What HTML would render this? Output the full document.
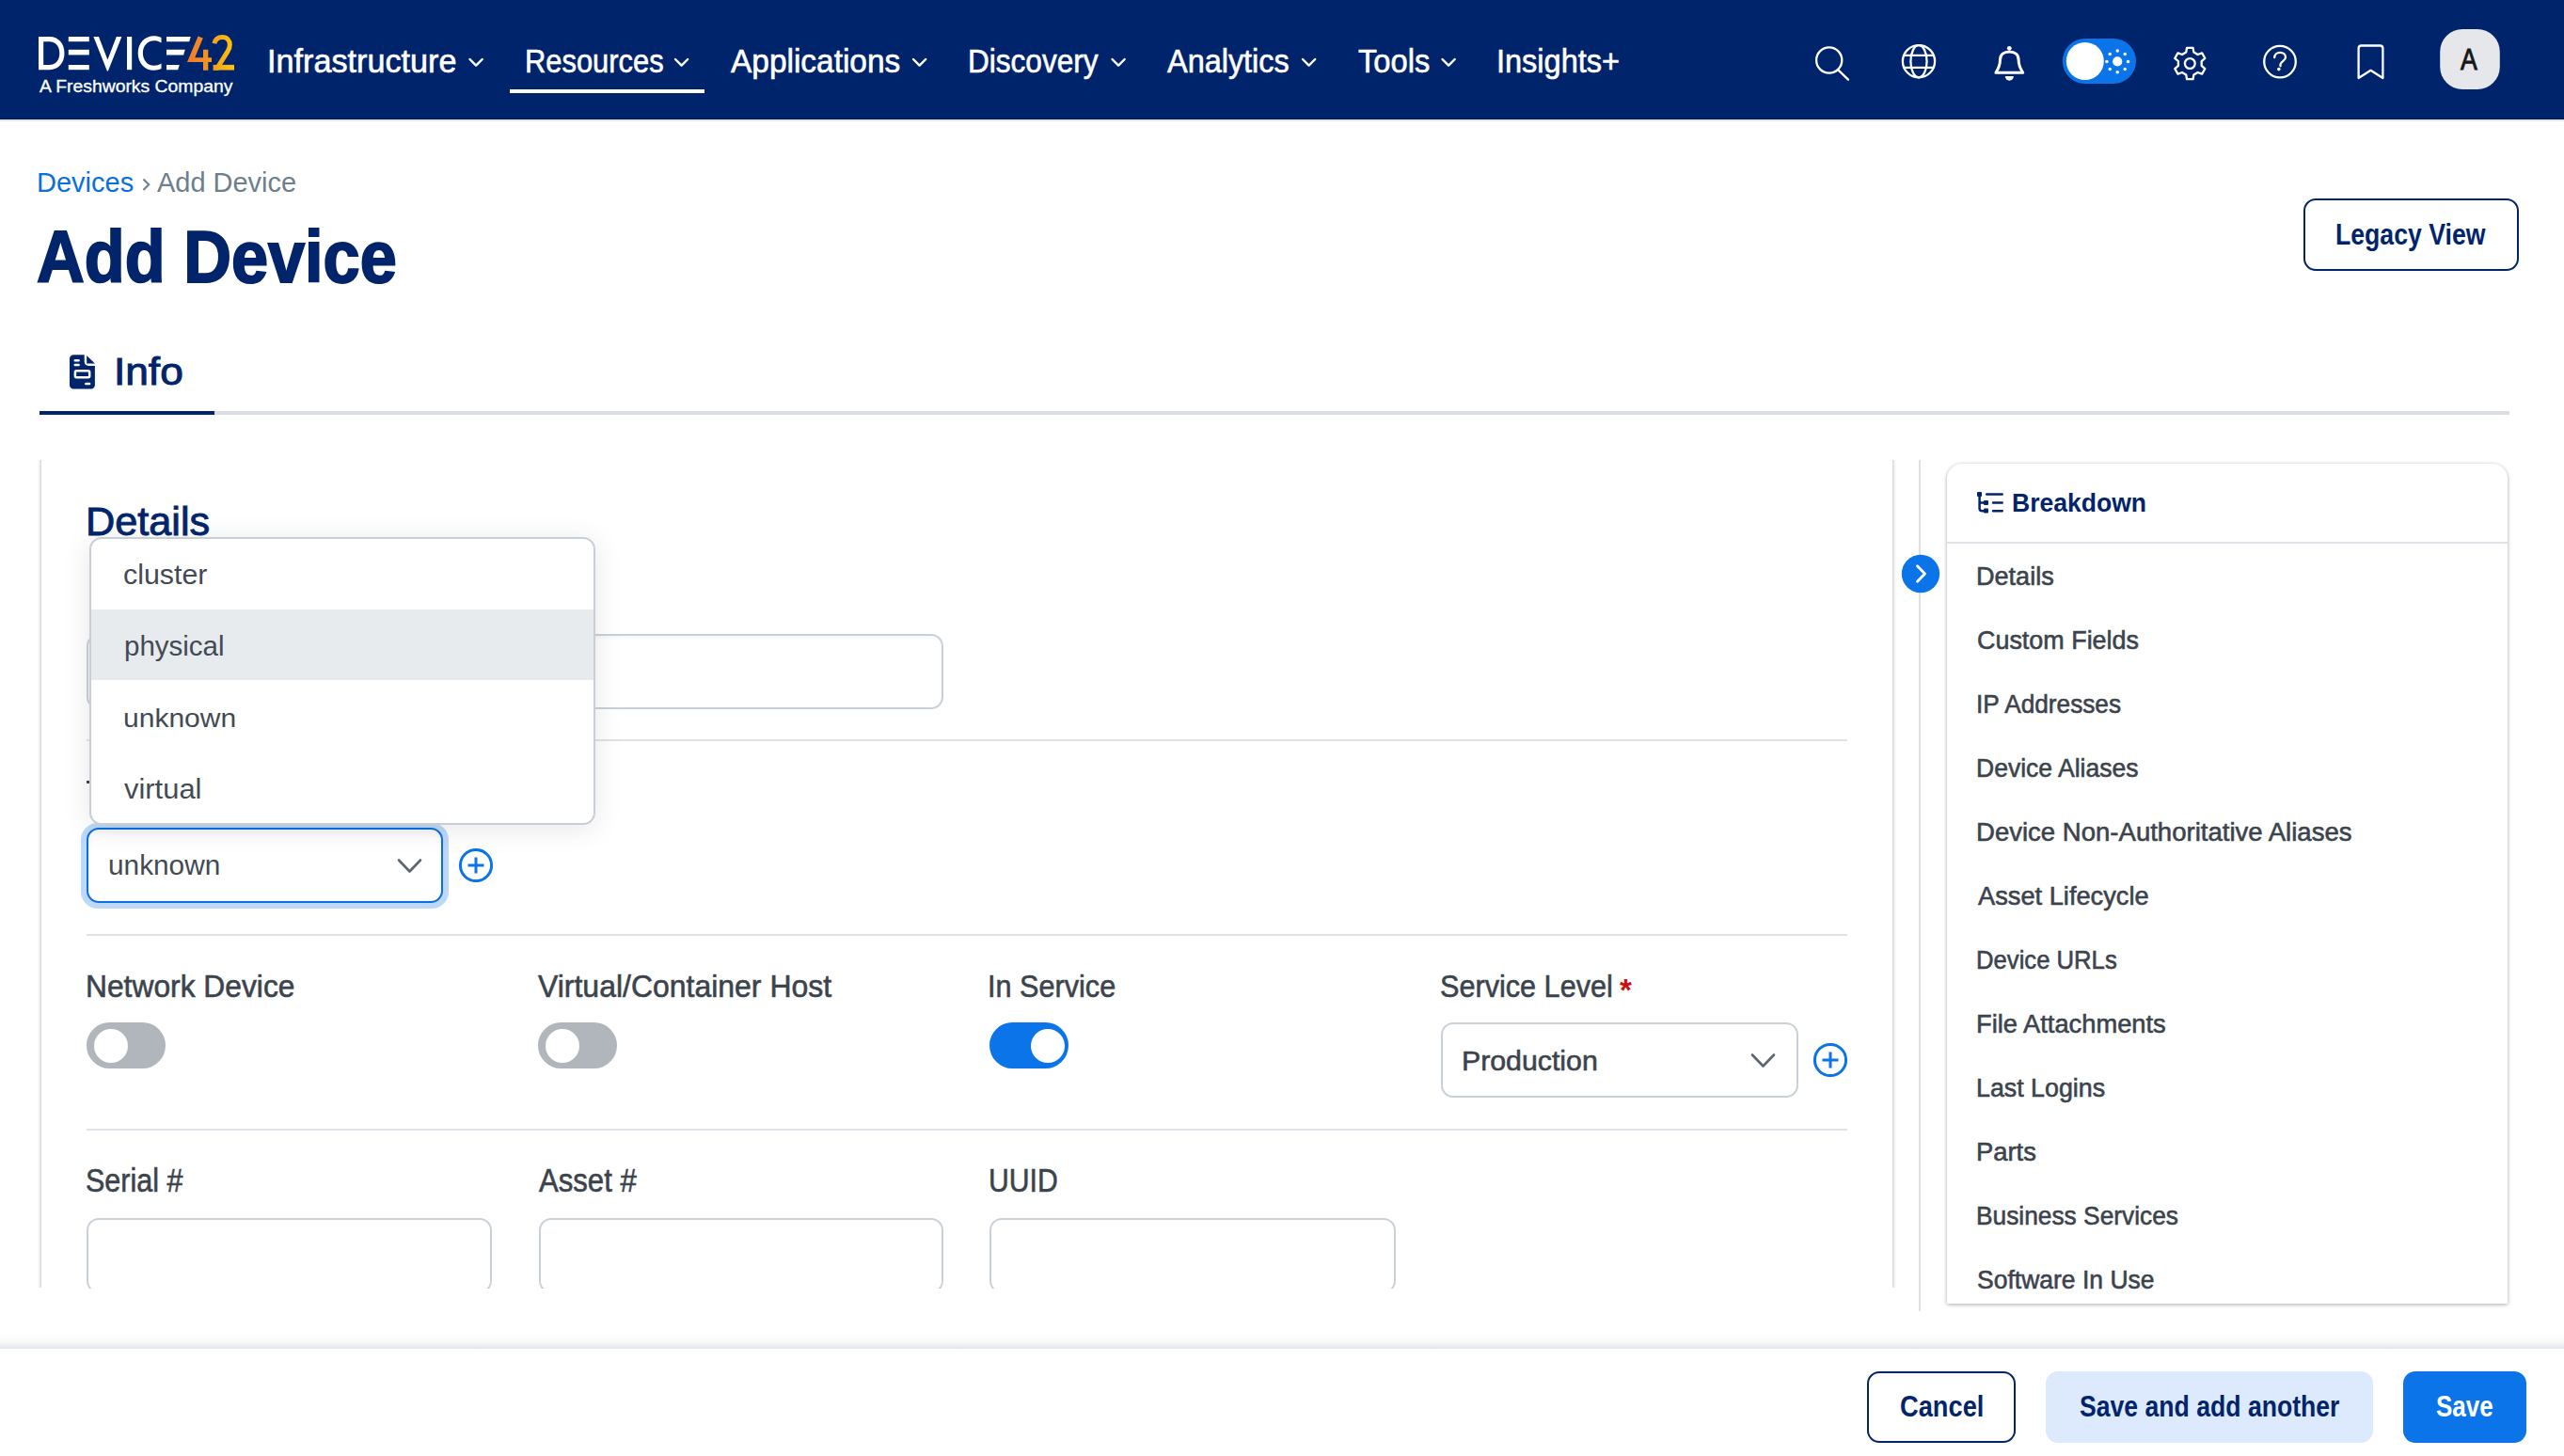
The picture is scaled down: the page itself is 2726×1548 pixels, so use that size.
<!DOCTYPE html>
<html><head><meta charset="utf-8"><title>Add Device</title>
<style>
*{box-sizing:border-box;margin:0;padding:0}
html,body{width:2726px;height:1548px;overflow:hidden;background:#fff;font-family:"Liberation Sans",sans-serif}
.t{position:absolute;white-space:nowrap;line-height:1}
.abs{position:absolute}
#nav{position:absolute;left:0;top:0;width:2726px;height:127px;background:#00246b}
.chev{position:absolute;top:60px;width:17px;height:11px}
</style></head><body>
<div id="nav"></div>
<div class="abs" style="left:0;top:126px;width:2726px;height:1px;background:#001a5c"></div>
<div class="abs" style="left:0;top:127px;width:2726px;height:2px;background:linear-gradient(#eceeef,#e1e4e7)"></div>
<!-- logo -->
<svg class="abs" style="left:0;top:0" width="260" height="80" viewBox="0 0 260 80">
  <defs><linearGradient id="g4" gradientUnits="userSpaceOnUse" x1="199" y1="0" x2="227" y2="0"><stop offset="0" stop-color="#ef7a2b"/><stop offset="1" stop-color="#f39a20"/></linearGradient><linearGradient id="g2" gradientUnits="userSpaceOnUse" x1="225" y1="0" x2="249" y2="0"><stop offset="0" stop-color="#f49e1d"/><stop offset="1" stop-color="#fdc40b"/></linearGradient></defs>
  <g fill="#fff">
    <!-- D -->
    <path d="M41 39h11.5c10 0 16 7.5 16 17.6S62.5 74.2 52.5 74.2H41zM46.2 44.2v24.8h6.3c6.8 0 10.8-5 10.8-12.4S59.3 44.2 52.5 44.2z"/>
    <!-- E -->
    <rect x="72.8" y="39" width="22" height="5.2"/><rect x="72.8" y="52.8" width="22" height="5.6"/><rect x="72.8" y="69" width="22" height="5.2"/>
    <!-- V -->
    <path d="M99.4 39h5.6l9.4 24.5L123.8 39h5.6l-14.5 36.5h-1z"/>
    <!-- I -->
    <rect x="135" y="39" width="5.2" height="35.2"/>
    <!-- C -->
    <path d="M171.5 45.5c-2.5-1.6-5-2.2-7.6-2.2c-7.5 0-12 6-12 13.2s4.5 13.2 12 13.2c2.6 0 5.1-.6 7.6-2.2v5.6c-2.4 1.2-5 1.7-7.8 1.7c-10.2 0-17-8-17-18.3S153.5 38.3 163.7 38.3c2.8 0 5.4.5 7.8 1.7z"/>
    <!-- E slanted -->
    <path d="M177 39h25.8l-1.6 5.2H177z"/><path d="M177 52.8h19.8l-1.7 5.6H177z"/><path d="M177 69h13.8l-1.6 5.2H177z"/>
  </g>
  <path fill="url(#g4)" d="M210.6 38.4L215.8 40.4L207.2 61.3H216V52.7H221.3V61.3H225V66H221.3V74.7H216V66H199Z"/>
  <clipPath id="c2"><rect x="224" y="30" width="30" height="44.7"/></clipPath>
  <g clip-path="url(#c2)" fill="url(#g2)">
    <path fill="none" stroke="url(#g2)" stroke-width="5" d="M227.9 46.3C228.9 41.6 232.3 39.6 236.3 39.6C241.5 39.6 244.3 43.3 244.3 47.6C244.3 50.6 243.6 52.4 242.2 54.4L228.4 76.5"/>
    <rect x="226.6" y="68.9" width="22.4" height="5.8"/>
  </g>
</svg>
<!-- nav chevrons -->
<svg class="abs" style="left:0;top:0" width="1600" height="127">
  <g fill="none" stroke="#fff" stroke-width="2.4" stroke-linecap="round" stroke-linejoin="round">
    <path d="M499.5 63l6.6 6.6 6.6-6.6"/>
    <path d="M718 63l6.6 6.6 6.6-6.6"/>
    <path d="M971 63l6.6 6.6 6.6-6.6"/>
    <path d="M1182.5 63l6.6 6.6 6.6-6.6"/>
    <path d="M1385 63l6.6 6.6 6.6-6.6"/>
    <path d="M1533.5 63l6.6 6.6 6.6-6.6"/>
  </g>
  <rect x="542" y="95" width="207" height="4" fill="#fff"/>
</svg>
<!-- nav icons -->
<svg class="abs" style="left:1900px;top:0" width="826" height="127" viewBox="1900 0 826 127">
  <g fill="none" stroke="#fff" stroke-width="2.3" stroke-linecap="round" stroke-linejoin="round">
    <circle cx="1944.7" cy="64" r="13.6"/>
    <path d="M1954.6 74.6l10.4 10"/>
    <circle cx="2040" cy="65.2" r="17.1"/>
    <ellipse cx="2040" cy="65.2" rx="8.6" ry="17.1"/>
    <path d="M2024.5 58.9h31M2024.5 71.9h31"/>
    <path stroke-width="3" d="M2121.9 77.3C2125 72.5 2126.5 69 2126.5 63.5C2126.5 58 2130.5 55 2136.3 55C2142.1 55 2146.1 58 2146.1 63.5C2146.1 69 2147.6 72.5 2150.7 77.3Z"/>
    <circle cx="2424" cy="65.6" r="16.8"/>
    <path d="M2418.2 61.2c0-3.3 2.6-5.4 5.9-5.4s5.9 2.1 5.9 5.1c0 3.5-4.5 4.1-5.5 7.5v1.9"/>
    <path d="M2507.6 83V51.5c0-1.9 1.2-3 3-3h19.8c1.8 0 3 1.1 3 3V83l-12.9-8.2z"/>
  </g>
  <g fill="#fff">
    <circle cx="2136.3" cy="51.3" r="2.4"/>
    <path d="M2131.8 81H2140.9A4.55 4.7 0 0 1 2131.8 81Z"/>
    <circle cx="2422.8" cy="73.6" r="1.8"/>
  </g>
  <!-- gear -->
  <g id="gear" fill="none" stroke="#fff" stroke-width="2.3" stroke-linejoin="round">
    <path d="M2324.20 55.59 L2325.06 50.81 L2331.54 50.81 L2332.40 55.59 L2336.57 57.99 L2341.13 56.35 L2344.37 61.97 L2340.67 65.10 L2340.67 69.90 L2344.37 73.03 L2341.13 78.65 L2336.57 77.01 L2332.40 79.41 L2331.54 84.19 L2325.06 84.19 L2324.20 79.41 L2320.03 77.01 L2315.47 78.65 L2312.23 73.03 L2315.93 69.90 L2315.93 65.10 L2312.23 61.97 L2315.47 56.35 L2320.03 57.99Z"/>
    <circle cx="2328.3" cy="67.5" r="5.4"/>
  </g>
  <!-- theme toggle -->
  <rect x="2192.8" y="41" width="78.2" height="48" rx="24" fill="#0a74e8"/>
  <circle cx="2216.8" cy="65" r="20" fill="#fff"/>
  <g fill="#fff">
    <circle cx="2251.2" cy="65.4" r="5.1"/>
    <circle cx="2262.50" cy="65.40" r="1.75"/><circle cx="2259.19" cy="73.39" r="1.75"/><circle cx="2251.20" cy="76.70" r="1.75"/><circle cx="2243.21" cy="73.39" r="1.75"/><circle cx="2239.90" cy="65.40" r="1.75"/><circle cx="2243.21" cy="57.41" r="1.75"/><circle cx="2251.20" cy="54.10" r="1.75"/><circle cx="2259.19" cy="57.41" r="1.75"/>
  </g>
  <!-- avatar -->
  <rect x="2594.2" y="31" width="63.6" height="64" rx="24" fill="#e5e7eb"/>
</svg>
<div class="t" style="left:2615.5px;top:47.7px;font-size:31px;color:#171717;-webkit-text-stroke:0.9px #171717;transform:scaleX(0.86);transform-origin:0 0">A</div>

<!-- Legacy view button -->
<div class="abs" style="left:2449px;top:211px;width:229px;height:77px;border:2.4px solid #02246a;border-radius:13px"></div>

<!-- tab -->
<svg class="abs" style="left:60px;top:370px" width="50" height="50" viewBox="60 370 50 50">
  <path fill="#02246a" d="M78 377.2h11.7v7.3c0 2.5 1.9 4.4 4.4 4.4h6.8v20.7c0 2.2-1.8 4-4 4H78c-2.2 0-4-1.8-4-4v-28.4c0-2.2 1.8-4 4-4zM92.2 377.9l8.7 8.6h-8.7z"/>
  <g fill="none" stroke="#fff" stroke-width="2.5" stroke-linecap="round">
    <path d="M79.8 383.3h3.8M79.8 387.9h3.8M91.3 408.1h3.8"/>
    <rect x="79.9" y="394.3" width="15.3" height="7" rx="1.5"/>
  </g>
</svg>
<div class="abs" style="left:42px;top:437px;width:2626px;height:4px;background:#dadee3"></div>
<div class="abs" style="left:42px;top:437px;width:186px;height:4px;background:#02246a"></div>

<!-- main card scroll area -->
<div class="abs" style="left:0;top:489px;width:2040px;height:880px;overflow:hidden">
  <div class="abs" style="left:44px;top:-13px;width:1968px;height:1200px;background:#fff;border-radius:16px;box-shadow:0 0 4px rgba(0,0,0,0.36)"></div>
  <!-- rows -->
</div>
<!-- separators -->
<div class="abs" style="left:92px;top:786px;width:1872px;height:2px;background:#dfe2e6"></div>
<div class="abs" style="left:92px;top:993px;width:1872px;height:2px;background:#dfe2e6"></div>
<div class="abs" style="left:92px;top:1200px;width:1872px;height:2px;background:#dfe2e6"></div>

<!-- name input (behind dropdown) -->
<div class="abs" style="left:92px;top:674px;width:911px;height:80px;border:2px solid #c9d0d7;border-radius:13px;box-shadow:inset 0 2px 4px rgba(0,0,0,0.04)"></div>

<!-- Type select (focused) -->
<div class="abs" style="left:86.3px;top:875px;width:390.5px;height:91px;border-radius:18px;background:#bdd8f8"></div>
<div class="abs" style="left:92.2px;top:880.3px;width:378.8px;height:79.8px;border:2.4px solid #0a6fe0;border-radius:13px;background:#fff;box-shadow:inset 0 3px 6px rgba(0,0,0,0.05)"></div>
<svg class="abs" style="left:0;top:0;overflow:visible" width="1" height="1">
  <path d="M424 914.5l11.5 12 11.5-12" fill="none" stroke="#5d6670" stroke-width="2.6" stroke-linecap="round" stroke-linejoin="round"/>
  <g fill="none" stroke="#0a74e8" stroke-width="3">
    <circle cx="506" cy="920" r="16.6"/><path d="M506 911.5v17M497.5 920h17"/>
  </g>
  <path d="M1863 1121.5l11.5 12 11.5-12" fill="none" stroke="#5d6670" stroke-width="2.6" stroke-linecap="round" stroke-linejoin="round"/>
  <g fill="none" stroke="#0a74e8" stroke-width="3">
    <circle cx="1946" cy="1127" r="16.6"/><path d="M1946 1118.5v17M1937.5 1127h17"/>
  </g>
</svg>

<!-- toggles -->
<div class="abs" style="left:92.3px;top:1087px;width:84px;height:49px;border-radius:25px;background:#b1b6bd"></div>
<div class="abs" style="left:100.3px;top:1093.5px;width:36px;height:36px;border-radius:50%;background:#fff"></div>
<div class="abs" style="left:572px;top:1087px;width:84px;height:49px;border-radius:25px;background:#b1b6bd"></div>
<div class="abs" style="left:580px;top:1093.5px;width:36px;height:36px;border-radius:50%;background:#fff"></div>
<div class="abs" style="left:1052px;top:1087px;width:84px;height:49px;border-radius:25px;background:#0a74e8"></div>
<div class="abs" style="left:1095.5px;top:1093.5px;width:36px;height:36px;border-radius:50%;background:#fff"></div>

<!-- service level select -->
<div class="abs" style="left:1532.4px;top:1087px;width:379.3px;height:80px;border:2px solid #c9d0d7;border-radius:13px"></div>
<div class="t" style="left:1722px;top:1036px;font-size:33px;font-weight:700;color:#cc1111">*</div>

<!-- serial inputs (clipped) -->
<div class="abs" style="left:0;top:1290px;width:2040px;height:79.5px;overflow:hidden">
  <div class="abs" style="left:92px;top:5px;width:431.3px;height:80px;border:2px solid #c9d0d7;border-radius:13px"></div>
  <div class="abs" style="left:572.8px;top:5px;width:430.7px;height:80px;border:2px solid #c9d0d7;border-radius:13px"></div>
  <div class="abs" style="left:1052.3px;top:5px;width:431.4px;height:80px;border:2px solid #c9d0d7;border-radius:13px"></div>
</div>

<!-- vertical line + breakdown -->
<div class="abs" style="left:2040px;top:489px;width:2px;height:905px;background:#dde1e6"></div>
<div class="abs" style="left:2070px;top:492.5px;width:596px;height:893.3px;background:#fff;border-radius:16px 16px 0 0;box-shadow:0 1px 4px rgba(0,0,0,0.34)"></div>
<div class="abs" style="left:2070px;top:576px;width:596px;height:2px;background:#dfe3e8"></div>
<svg class="abs" style="left:2095px;top:515px" width="45" height="40" viewBox="2095 515 45 40">
  <g fill="#02246a">
    <rect x="2102" y="523" width="5" height="5" rx="1"/>
    <rect x="2109" y="532" width="5" height="5" rx="1"/>
    <rect x="2109" y="540.6" width="5" height="5" rx="1"/>
  </g>
  <g fill="none" stroke="#02246a" stroke-width="2.5" stroke-linecap="round">
    <path d="M2104.6 527v13.5c0 1.8 1 2.8 2.8 2.8h3M2104.6 534.5h5"/>
    <path d="M2112.2 525.6h16.5M2119 534.5h9.7M2119 543.3h9.7"/>
  </g>
</svg>
<svg class="abs" style="left:2020px;top:587px" width="46" height="46" viewBox="2020 587 46 46">
  <circle cx="2042" cy="610" r="20.2" fill="#0a74e8"/>
  <path d="M2038.5 601.8l8 8.2-8 8.2" fill="none" stroke="#fff" stroke-width="2.8" stroke-linecap="round" stroke-linejoin="round"/>
</svg>

<!-- dropdown -->
<div class="abs" style="left:95px;top:571px;width:538.3px;height:306.3px;background:#fff;border:2px solid #c8ced6;border-radius:13px;box-shadow:0 4px 30px rgba(0,0,0,0.10);overflow:hidden">
  <div class="abs" style="left:0;top:75px;width:100%;height:75.4px;background:#e8ebee"></div>
</div>

<!-- footer -->
<div class="abs" style="left:0;top:1418px;width:2726px;height:16px;background:linear-gradient(rgba(40,60,120,0),rgba(40,60,120,0.03) 55%,rgba(40,60,120,0.135))"></div>
<div class="abs" style="left:0;top:1434px;width:2726px;height:114px;background:#fff"></div>
<div class="abs" style="left:1985.4px;top:1458.2px;width:157.4px;height:76.2px;border:2.4px solid #02246a;border-radius:13px"></div>
<div class="abs" style="left:2175px;top:1458.2px;width:348.2px;height:76.2px;background:#dde9fc;border-radius:13px"></div>
<div class="abs" style="left:2554.6px;top:1458.2px;width:131.4px;height:76.2px;background:#0a74e8;border-radius:13px"></div>

<svg class="abs" style="left:0;top:0;overflow:visible" width="1" height="1">
  <path d="M153.2 191.2l5 5-5 5" fill="none" stroke="#6f808e" stroke-width="2.1" stroke-linecap="square"/>
</svg>
<div class="abs" style="left:92px;top:830px;width:3px;height:2.6px;background:#3b434d"></div>
<div class=t style="left:284.0px;top:47.5px;font-size:34.2px;font-weight:400;color:#ffffff;-webkit-text-stroke:0.6px #fff;">Infrastructure</div>
<div class=t style="left:557.6px;top:47.5px;font-size:34.2px;font-weight:400;color:#ffffff;transform:scaleX(0.9032);transform-origin:0 0;-webkit-text-stroke:0.6px #fff;">Resources</div>
<div class=t style="left:777.0px;top:47.5px;font-size:34.2px;font-weight:400;color:#ffffff;transform:scaleX(0.9779);transform-origin:0 0;-webkit-text-stroke:0.6px #fff;">Applications</div>
<div class=t style="left:1028.9px;top:47.5px;font-size:34.2px;font-weight:400;color:#ffffff;transform:scaleX(0.9230);transform-origin:0 0;-webkit-text-stroke:0.6px #fff;">Discovery</div>
<div class=t style="left:1241.3px;top:47.5px;font-size:34.2px;font-weight:400;color:#ffffff;transform:scaleX(0.9484);transform-origin:0 0;-webkit-text-stroke:0.6px #fff;">Analytics</div>
<div class=t style="left:1444.0px;top:47.5px;font-size:34.2px;font-weight:400;color:#ffffff;transform:scaleX(0.9553);transform-origin:0 0;-webkit-text-stroke:0.6px #fff;">Tools</div>
<div class=t style="left:1590.9px;top:47.5px;font-size:34.2px;font-weight:400;color:#ffffff;transform:scaleX(0.9505);transform-origin:0 0;-webkit-text-stroke:0.6px #fff;">Insights+</div>
<div class=t style="left:41.5px;top:82.6px;font-size:18px;font-weight:400;color:#ffffff;transform:scaleX(1.0752);transform-origin:0 0;-webkit-text-stroke:0.3px #fff;">A Freshworks Company</div>
<div class=t style="left:39.0px;top:179.0px;font-size:29.57px;font-weight:400;color:#0a6fde;transform:scaleX(0.9808);transform-origin:0 0;">Devices</div>
<div class=t style="left:167.3px;top:179.0px;font-size:29.57px;font-weight:400;color:#6d7f8c;transform:scaleX(0.9799);transform-origin:0 0;">Add Device</div>
<div class=t style="left:39.1px;top:234.6px;font-size:77.39px;font-weight:700;color:#02246a;transform:scaleX(0.9083);transform-origin:0 0;-webkit-text-stroke:2px #02246a;">Add Device</div>
<div class=t style="left:2483.2px;top:233.6px;font-size:30.43px;font-weight:700;color:#02246a;transform:scaleX(0.8758);transform-origin:0 0;">Legacy View</div>
<div class=t style="left:120.8px;top:374.3px;font-size:41.45px;font-weight:400;color:#02246a;transform:scaleX(1.0665);transform-origin:0 0;-webkit-text-stroke:1px #02246a;">Info</div>
<div class=t style="left:91.3px;top:533.9px;font-size:41.59px;font-weight:400;color:#02246a;transform:scaleX(1.0397);transform-origin:0 0;-webkit-text-stroke:0.9px #02246a;">Details</div>
<div class=t style="left:130.6px;top:595.6px;font-size:30.14px;font-weight:400;color:#424a54;transform:scaleX(1.0080);transform-origin:0 0;">cluster</div>
<div class=t style="left:132.0px;top:671.6px;font-size:29.71px;font-weight:400;color:#424a54;transform:scaleX(0.9932);transform-origin:0 0;">physical</div>
<div class=t style="left:130.7px;top:750.0px;font-size:27.83px;font-weight:400;color:#424a54;transform:scaleX(1.0788);transform-origin:0 0;">unknown</div>
<div class=t style="left:131.8px;top:823.5px;font-size:30.14px;font-weight:400;color:#424a54;transform:scaleX(1.0259);transform-origin:0 0;">virtual</div>
<div class=t style="left:115.4px;top:906.3px;font-size:29.13px;font-weight:400;color:#424a54;transform:scaleX(1.0228);transform-origin:0 0;">unknown</div>
<div class=t style="left:91.1px;top:1032.3px;font-size:33.48px;font-weight:400;color:#3b434d;transform:scaleX(0.9494);transform-origin:0 0;-webkit-text-stroke:0.6px #3b434d;">Network Device</div>
<div class=t style="left:572.0px;top:1032.3px;font-size:33.48px;font-weight:400;color:#3b434d;transform:scaleX(0.9551);transform-origin:0 0;-webkit-text-stroke:0.6px #3b434d;">Virtual/Container Host</div>
<div class=t style="left:1049.8px;top:1032.3px;font-size:33.48px;font-weight:400;color:#3b434d;transform:scaleX(0.9153);transform-origin:0 0;-webkit-text-stroke:0.6px #3b434d;">In Service</div>
<div class=t style="left:1530.8px;top:1032.3px;font-size:33.48px;font-weight:400;color:#3b434d;transform:scaleX(0.9150);transform-origin:0 0;-webkit-text-stroke:0.6px #3b434d;">Service Level</div>
<div class=t style="left:1554.0px;top:1112.8px;font-size:30.29px;font-weight:400;color:#3b434d;-webkit-text-stroke:0.6px #3b434d;">Production</div>
<div class=t style="left:91.1px;top:1238.0px;font-size:35.51px;font-weight:400;color:#3b434d;transform:scaleX(0.8594);transform-origin:0 0;-webkit-text-stroke:0.6px #3b434d;">Serial #</div>
<div class=t style="left:572.8px;top:1238.0px;font-size:35.51px;font-weight:400;color:#3b434d;transform:scaleX(0.8765);transform-origin:0 0;-webkit-text-stroke:0.6px #3b434d;">Asset #</div>
<div class=t style="left:1050.6px;top:1238.0px;font-size:35.51px;font-weight:400;color:#3b434d;transform:scaleX(0.8492);transform-origin:0 0;-webkit-text-stroke:0.6px #3b434d;">UUID</div>
<div class=t style="left:2138.5px;top:520.3px;font-size:28.26px;font-weight:700;color:#02246a;transform:scaleX(0.9392);transform-origin:0 0;">Breakdown</div>
<div class=t style="left:2101.1px;top:598.0px;font-size:28.26px;font-weight:400;color:#3b434d;transform:scaleX(0.9581);transform-origin:0 0;-webkit-text-stroke:0.6px #3b434d;">Details</div>
<div class=t style="left:2102.0px;top:666.0px;font-size:28.26px;font-weight:400;color:#3b434d;transform:scaleX(0.9526);transform-origin:0 0;-webkit-text-stroke:0.6px #3b434d;">Custom Fields</div>
<div class=t style="left:2101.1px;top:734.0px;font-size:28.26px;font-weight:400;color:#3b434d;transform:scaleX(0.9284);transform-origin:0 0;-webkit-text-stroke:0.6px #3b434d;">IP Addresses</div>
<div class=t style="left:2101.1px;top:802.0px;font-size:28.26px;font-weight:400;color:#3b434d;transform:scaleX(0.9392);transform-origin:0 0;-webkit-text-stroke:0.6px #3b434d;">Device Aliases</div>
<div class=t style="left:2101.1px;top:870.0px;font-size:28.26px;font-weight:400;color:#3b434d;transform:scaleX(0.9749);transform-origin:0 0;-webkit-text-stroke:0.6px #3b434d;">Device Non-Authoritative Aliases</div>
<div class=t style="left:2103.0px;top:938.0px;font-size:28.26px;font-weight:400;color:#3b434d;transform:scaleX(0.9643);transform-origin:0 0;-webkit-text-stroke:0.6px #3b434d;">Asset Lifecycle</div>
<div class=t style="left:2101.2px;top:1006.0px;font-size:28.26px;font-weight:400;color:#3b434d;transform:scaleX(0.9083);transform-origin:0 0;-webkit-text-stroke:0.6px #3b434d;">Device URLs</div>
<div class=t style="left:2101.1px;top:1074.0px;font-size:28.26px;font-weight:400;color:#3b434d;transform:scaleX(0.9661);transform-origin:0 0;-webkit-text-stroke:0.6px #3b434d;">File Attachments</div>
<div class=t style="left:2101.1px;top:1142.0px;font-size:28.26px;font-weight:400;color:#3b434d;transform:scaleX(0.9483);transform-origin:0 0;-webkit-text-stroke:0.6px #3b434d;">Last Logins</div>
<div class=t style="left:2101.1px;top:1210.0px;font-size:28.26px;font-weight:400;color:#3b434d;transform:scaleX(0.9685);transform-origin:0 0;-webkit-text-stroke:0.6px #3b434d;">Parts</div>
<div class=t style="left:2101.1px;top:1278.0px;font-size:28.26px;font-weight:400;color:#3b434d;transform:scaleX(0.9315);transform-origin:0 0;-webkit-text-stroke:0.6px #3b434d;">Business Services</div>
<div class=t style="left:2102.1px;top:1346.0px;font-size:28.26px;font-weight:400;color:#3b434d;transform:scaleX(0.9379);transform-origin:0 0;-webkit-text-stroke:0.6px #3b434d;">Software In Use</div>
<div class=t style="left:2020.1px;top:1480.2px;font-size:31.3px;font-weight:700;color:#02246a;transform:scaleX(0.8706);transform-origin:0 0;">Cancel</div>
<div class=t style="left:2211.0px;top:1480.2px;font-size:31.3px;font-weight:700;color:#02246a;transform:scaleX(0.8500);transform-origin:0 0;">Save and add another</div>
<div class=t style="left:2590.4px;top:1480.2px;font-size:31.3px;font-weight:700;color:#ffffff;transform:scaleX(0.8310);transform-origin:0 0;">Save</div>
</body></html>
